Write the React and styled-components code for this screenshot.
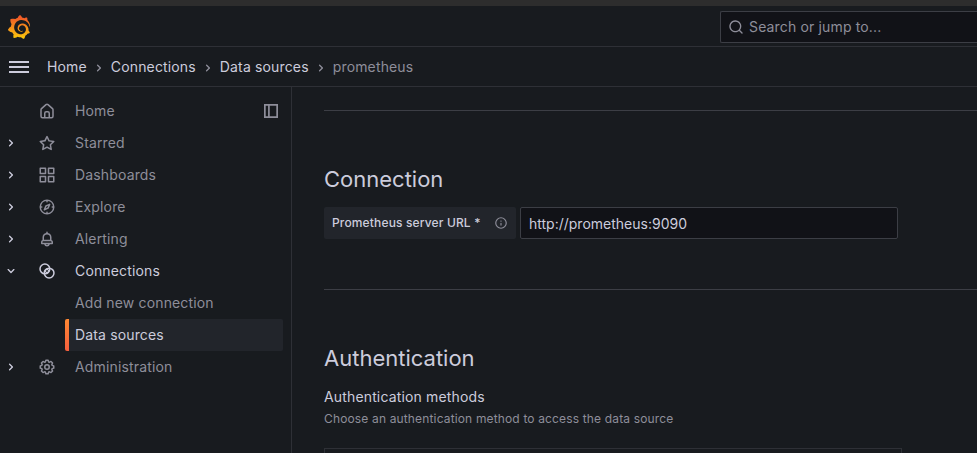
import React from "react";
import styled, { createGlobalStyle } from "styled-components";
import { SiGrafana } from "react-icons/si";

const c = {
  base: "#181b1f",
  canvas: "#111217",
  raised: "#22252b",
  text: "#ccccdc",
  muted: "#8e8e9a",
  weak: "#2e3036",
  medium: "#3c3e45",
};

const GlobalStyle = createGlobalStyle`
  * { box-sizing: border-box; }
  body {
    margin: 0;
    overflow: hidden;
    background: ${c.base};
    color: ${c.text};
    font: 400 14px/22px Inter, "Liberation Sans", sans-serif;
    letter-spacing: 0.15px;
  }
  h3, p { margin: 0; font-weight: 400; }
`;

const paths = {
  search: "M21.71,20.29,18,16.61A9,9,0,1,0,16.61,18l3.68,3.68a1,1,0,0,0,1.42,0A1,1,0,0,0,21.71,20.29ZM11,18a7,7,0,1,1,7-7A7,7,0,0,1,11,18Z",
  home: "M20,8h0L14,2.74a3,3,0,0,0-4,0L4,8a3,3,0,0,0-1,2.26V19a3,3,0,0,0,3,3H18a3,3,0,0,0,3-3V10.25A3,3,0,0,0,20,8ZM14,20H10V15a1,1,0,0,1,1-1h2a1,1,0,0,1,1,1Zm5-1a1,1,0,0,1-1,1H16V15a3,3,0,0,0-3-3H11a3,3,0,0,0-3,3v5H6a1,1,0,0,1-1-1V10.25a1,1,0,0,1,.34-.75l6-5.25a1,1,0,0,1,1.32,0l6,5.25a1,1,0,0,1,.34.75Z",
  star: "M22,9.67A1,1,0,0,0,21.14,9l-5.69-.83L12.9,3a1,1,0,0,0-1.8,0L8.55,8.16,2.86,9a1,1,0,0,0-.81.68,1,1,0,0,0,.25,1l4.13,4-1,5.68A1,1,0,0,0,6.9,21.44L12,18.77l5.1,2.67a.93.93,0,0,0,.46.12,1,1,0,0,0,.59-.19,1,1,0,0,0,.4-1l-1-5.68,4.13-4A1,1,0,0,0,22,9.67Zm-6.15,4a1,1,0,0,0-.29.88l.72,4.2-3.76-2a1.06,1.06,0,0,0-.94,0l-3.76,2,.72-4.2a1,1,0,0,0-.29-.88l-3-3,4.21-.61a1,1,0,0,0,.76-.55L12,5.7l1.88,3.82a1,1,0,0,0,.76.55l4.21.61Z",
  apps: "M10,13H3a1,1,0,0,0-1,1v7a1,1,0,0,0,1,1h7a1,1,0,0,0,1-1V14A1,1,0,0,0,10,13ZM9,20H4V15H9ZM21,2H14a1,1,0,0,0-1,1v7a1,1,0,0,0,1,1h7a1,1,0,0,0,1-1V3A1,1,0,0,0,21,2ZM20,9H15V4h5Zm1,4H14a1,1,0,0,0-1,1v7a1,1,0,0,0,1,1h7a1,1,0,0,0,1-1V14A1,1,0,0,0,21,13Zm-1,7H15V15h5ZM10,2H3A1,1,0,0,0,2,3v7a1,1,0,0,0,1,1h7a1,1,0,0,0,1-1V3A1,1,0,0,0,10,2ZM9,9H4V4H9Z",
  compass: "M12,2A10,10,0,1,0,22,12,10,10,0,0,0,12,2Zm1,17.93V19a1,1,0,0,0-2,0v.93A8,8,0,0,1,4.07,13H5a1,1,0,0,0,0-2H4.07A8,8,0,0,1,11,4.07V5a1,1,0,0,0,2,0V4.07A8,8,0,0,1,19.93,11H19a1,1,0,0,0,0,2h.93A8,8,0,0,1,13,19.93ZM15.14,7.55l-5,2.12a1,1,0,0,0-.52.52l-2.12,5a1,1,0,0,0,.21,1.1,1,1,0,0,0,.7.3.93.93,0,0,0,.4-.09l5-2.12a1,1,0,0,0,.52-.52l2.12-5a1,1,0,0,0-1.31-1.31Zm-2.49,5.1-2.28,1,1-2.28,2.28-1Z",
  bell: "M18,13.18V10a6,6,0,0,0-5-5.91V3a1,1,0,0,0-2,0V4.09A6,6,0,0,0,6,10v3.18A3,3,0,0,0,4,16v2a1,1,0,0,0,1,1H8.14a4,4,0,0,0,7.72,0H19a1,1,0,0,0,1-1V16A3,3,0,0,0,18,13.18ZM8,10a4,4,0,0,1,8,0v3H8Zm4,10a2,2,0,0,1-1.72-1h3.44A2,2,0,0,1,12,20Zm6-3H6V16a1,1,0,0,1,1-1H17a1,1,0,0,1,1,1Z",
  cog: "M21.32,9.55l-1.89-.63.89-1.78A1,1,0,0,0,20.13,6L18,3.87a1,1,0,0,0-1.15-.19l-1.78.89-.63-1.89A1,1,0,0,0,13.5,2h-3a1,1,0,0,0-.95.68L8.92,4.57,7.14,3.68A1,1,0,0,0,6,3.87L3.87,6a1,1,0,0,0-.19,1.15l.89,1.78-1.89.63A1,1,0,0,0,2,10.5v3a1,1,0,0,0,.68.95l1.89.63-.89,1.78A1,1,0,0,0,3.87,18L6,20.13a1,1,0,0,0,1.15.19l1.78-.89.63,1.89a1,1,0,0,0,.95.68h3a1,1,0,0,0,.95-.68l.63-1.89,1.78.89A1,1,0,0,0,18,20.13L20.13,18a1,1,0,0,0,.19-1.15l-.89-1.78,1.89-.63A1,1,0,0,0,22,13.5v-3A1,1,0,0,0,21.32,9.55ZM20,12.78l-1.2.4A2,2,0,0,0,17.64,16l.57,1.14-1.1,1.1L16,17.64a2,2,0,0,0-2.79,1.16l-.4,1.2H11.22l-.4-1.2A2,2,0,0,0,8,17.64l-1.14.57-1.1-1.1L6.36,16A2,2,0,0,0,5.2,13.18L4,12.78V11.22l1.2-.4A2,2,0,0,0,6.36,8L5.79,6.89l1.1-1.1L8,6.36A2,2,0,0,0,10.82,5.2l.4-1.2h1.56l.4,1.2A2,2,0,0,0,16,6.36l1.14-.57,1.1,1.1L17.64,8a2,2,0,0,0,1.16,2.79l1.2.4ZM12,8a4,4,0,1,0,4,4A4,4,0,0,0,12,8Zm0,6a2,2,0,1,1,2-2A2,2,0,0,1,12,14Z",
  right: "M14.83,11.29,10.59,7.05a1,1,0,0,0-1.42,0,1,1,0,0,0,0,1.41L12.71,12,9.17,15.54a1,1,0,0,0,0,1.41,1,1,0,0,0,.71.29,1,1,0,0,0,.71-.29l4.24-4.24A1,1,0,0,0,14.83,11.29Z",
  down: "M17,9.17a1,1,0,0,0-1.41,0L12,12.71,8.46,9.17a1,1,0,0,0-1.41,0,1,1,0,0,0,0,1.42l4.24,4.24a1,1,0,0,0,1.42,0L17,10.59A1,1,0,0,0,17,9.17Z",
  info: "M12,2A10,10,0,1,0,22,12,10,10,0,0,0,12,2Zm0,18a8,8,0,1,1,8-8A8,8,0,0,1,12,20Zm0-8.5a1,1,0,0,0-1,1v3a1,1,0,0,0,2,0v-3A1,1,0,0,0,12,11.5Zm0-4a1.25,1.25,0,1,0,1.25,1.25A1.25,1.25,0,0,0,12,7.5Z",
};

const Svg = styled.svg`
  display: block;
  flex: none;
  width: ${(p) => p.$size}px;
  height: ${(p) => p.$size}px;
  fill: currentColor;
`;

const Icon = ({ name, size = 16 }) => (
  <Svg $size={size} viewBox="0 0 24 24" aria-hidden="true">
    <path d={paths[name]} />
  </Svg>
);

const ConnectionsIcon = () => (
  <Svg $size={18} viewBox="0 0 24 24" aria-hidden="true">
    <g fill="none" stroke="currentColor" strokeWidth="2">
      <circle cx="9.2" cy="9.2" r="6.5" />
      <circle cx="14.8" cy="14.8" r="6.5" />
      <path d="M12 9.2 14.8 12 12 14.8 9.2 12z" strokeWidth="1.5" />
    </g>
  </Svg>
);

const DockIcon = () => (
  <Svg $size={14} viewBox="0 0 14 14" aria-hidden="true">
    <path fill="none" stroke="currentColor" strokeWidth="1.7" d="M.85.85h12.3v12.3H.85zM4.9.85v12.3" />
  </Svg>
);

const Page = styled.div`
  display: flex;
  flex-direction: column;
  width: 100vw;
  height: 100vh;
  overflow: hidden;
`;
const WindowEdge = styled.div`
  flex: none;
  height: 6px;
  background: #2d2d2d;
`;
const TopBar = styled.header`
  display: flex;
  flex: none;
  align-items: center;
  justify-content: space-between;
  height: 41px;
  padding: 2px 0 0 7px;
  border-bottom: 1px solid ${c.weak};
`;
const Logo = styled(SiGrafana)`
  display: block;
  width: 24px;
  height: 24px;
  fill: url(#flame);
`;
const GradientDefs = styled.svg`
  position: absolute;
  width: 0;
  height: 0;
`;
const Search = styled.div`
  display: flex;
  align-items: center;
  gap: 5px;
  width: 257px;
  height: 32px;
  padding-left: 7px;
  border: 1px solid ${c.medium};
  border-right: 0;
  border-radius: 2px 0 0 2px;
  background: ${c.canvas};
  color: ${c.muted};
`;
const CrumbBar = styled.nav`
  display: flex;
  flex: none;
  align-items: center;
  height: 40px;
  padding-left: 9px;
  border-bottom: 1px solid ${c.weak};
`;
const Burger = styled.button`
  display: grid;
  gap: 3px;
  width: 20px;
  margin: 0 18px 0 0;
  padding: 0;
  border: 0;
  background: none;
`;
const BurgerLine = styled.span`
  height: 2px;
  background: ${c.text};
`;
const Crumb = styled.span`
  color: ${(p) => (p.$current ? c.muted : c.text)};
`;
const CrumbArrow = styled.span`
  margin: 2px 4px 0;
  color: ${c.muted};
`;
const Body = styled.div`
  display: flex;
  flex: 1;
  min-height: 0;
`;
const Sidebar = styled.aside`
  flex: none;
  width: 292px;
  padding: 8px 8px 0 0;
  border-right: 1px solid ${c.weak};
`;
const NavRow = styled.div`
  display: grid;
  grid-template-columns: 38px 37px 1fr auto;
  align-items: center;
  height: 32px;
  padding-right: 5px;
  color: ${(p) => (p.$active ? c.text : c.muted)};
`;
const Expander = styled.span`
  padding-left: 3px;
  color: ${c.text};
`;
const SubRow = styled.div`
  display: flex;
  align-items: center;
  height: 32px;
  margin-left: 65px;
  padding-left: 10px;
  border-radius: 2px;
  color: ${(p) => (p.$active ? c.text : c.muted)};
  background: ${(p) =>
    p.$active
      ? `linear-gradient(#ff8833, #f55f3e) left / 4px 100% no-repeat, ${c.raised}`
      : "none"};
`;
const Main = styled.main`
  display: flex;
  flex: 1;
  flex-direction: column;
  min-width: 0;
  padding: 23px 0 0 32px;
`;
const Rule = styled.div`
  flex: none;
  height: 1px;
  background: ${c.medium};
`;
const Section = styled.section`
  flex: none;
  height: ${(p) => p.$height}px;
  padding-top: 56px;
`;
const Title = styled.h3`
  font-size: 22px;
  line-height: 24px;
  letter-spacing: 0;
`;
const Field = styled.div`
  display: flex;
  gap: 4px;
  margin-top: 16px;
`;
const FieldLabel = styled.label`
  display: flex;
  align-items: center;
  justify-content: space-between;
  width: 192px;
  height: 32px;
  padding: 0 8px;
  border-radius: 2px;
  background: ${c.raised};
  font-size: 12px;
  font-weight: 500;
`;
const Info = styled.span`
  color: ${c.muted};
`;
const Input = styled.input`
  width: 378px;
  height: 32px;
  padding: 1px 8px 0;
  border: 1px solid ${c.medium};
  border-radius: 2px;
  background: ${c.canvas};
  color: ${c.text};
  font: inherit;
  letter-spacing: 0;
`;
const Subtitle = styled.p`
  margin-top: 16px;
`;
const Hint = styled.p`
  color: ${c.muted};
  font-size: 12px;
`;
const MethodBox = styled.div`
  width: 578px;
  height: 40px;
  margin-top: 18px;
  border: 1px solid ${c.weak};
`;

const crumbs = ["Home", "Connections", "Data sources", "prometheus"];
const nav = [
  { label: "Home", icon: "home" },
  { label: "Starred", icon: "star", arrow: "right" },
  { label: "Dashboards", icon: "apps", arrow: "right" },
  { label: "Explore", icon: "compass", arrow: "right" },
  { label: "Alerting", icon: "bell", arrow: "right" },
  {
    label: "Connections",
    icon: "connections",
    arrow: "down",
    active: true,
    items: [{ label: "Add new connection" }, { label: "Data sources", active: true }],
  },
  { label: "Administration", icon: "cog", arrow: "right" },
];

export default function App() {
  return (
    <Page>
      <GlobalStyle />
      <GradientDefs aria-hidden="true">
        <linearGradient id="flame" x1="0" y1="0" x2="0" y2="1">
          <stop offset="0.1" stopColor="#f05a28" />
          <stop offset="1" stopColor="#fbca0a" />
        </linearGradient>
      </GradientDefs>
      <WindowEdge />
      <TopBar>
        <Logo />
        <Search>
          <Icon name="search" />
          <span>Search or jump to...</span>
        </Search>
      </TopBar>
      <CrumbBar>
        <Burger aria-label="Menu">
          <BurgerLine />
          <BurgerLine />
          <BurgerLine />
        </Burger>
        {crumbs.map((label, i) => (
          <React.Fragment key={label}>
            {i > 0 && <CrumbArrow><Icon name="right" /></CrumbArrow>}
            <Crumb $current={i === crumbs.length - 1}>{label}</Crumb>
          </React.Fragment>
        ))}
      </CrumbBar>
      <Body>
        <Sidebar>
          {nav.map((n) => (
            <React.Fragment key={n.label}>
              <NavRow $active={n.active}>
                <Expander>{n.arrow && <Icon name={n.arrow} />}</Expander>
                {n.icon === "connections" ? <ConnectionsIcon /> : <Icon name={n.icon} size={18} />}
                <span>{n.label}</span>
                {n.icon === "home" && <DockIcon />}
              </NavRow>
              {n.items?.map((s) => (
                <SubRow key={s.label} $active={s.active}>{s.label}</SubRow>
              ))}
            </React.Fragment>
          ))}
        </Sidebar>
        <Main>
          <Rule />
          <Section $height={178}>
            <Title>Connection</Title>
            <Field>
              <FieldLabel htmlFor="url">
                Prometheus server URL *
                <Info><Icon name="info" size={14} /></Info>
              </FieldLabel>
              <Input id="url" defaultValue="http://prometheus:9090" />
            </Field>
          </Section>
          <Rule />
          <Section $height={200}>
            <Title>Authentication</Title>
            <Subtitle>Authentication methods</Subtitle>
            <Hint>Choose an authentication method to access the data source</Hint>
            <MethodBox />
          </Section>
        </Main>
      </Body>
    </Page>
  );
}
